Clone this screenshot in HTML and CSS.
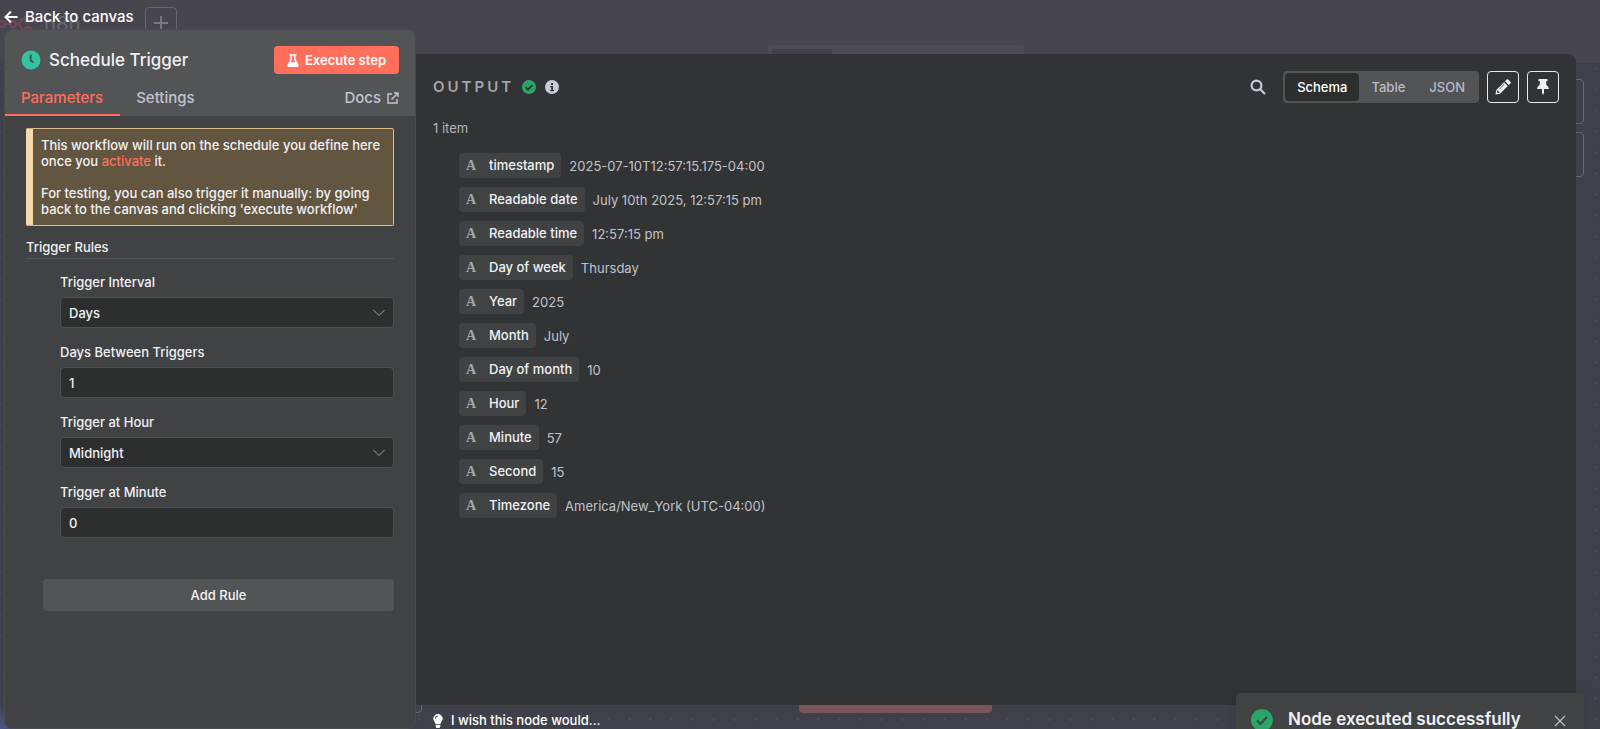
FILE: index.html
```html
<!DOCTYPE html>
<html lang="en">
<head>
<meta charset="utf-8">
<title>Schedule Trigger</title>
<link rel="stylesheet" href="styles.css">
</head>
<body>
<div class="app">
  <div class="canvas" aria-hidden="true">
    <div class="canvas-dots"></div>
    <div class="canvas-header"></div>
    <svg class="brand-mark" viewBox="0 0 32 18" width="32" height="18" fill="none" stroke="currentColor" stroke-width="2"><circle cx="2" cy="11" r="3"/><circle cx="13" cy="11" r="3"/><path d="M5 11h5M16 11h2c3 0 2-5 5-5h2M18 11c3 0 2 5 5 5h2"/><circle cx="28" cy="6" r="3"/><circle cx="28" cy="17" r="3"/></svg>
    <span class="brand-name">n8n</span>
    <span class="canvas-add"><svg viewBox="0 0 14 14" width="14" height="14" stroke="currentColor" stroke-width="2"><path d="M7 0v14M0 7h14"/></svg></span>
    <span class="canvas-tabs"></span>
    <span class="canvas-tool tool-one"></span>
    <span class="canvas-tool tool-two"></span>
    <span class="canvas-corner"></span>
    <span class="canvas-execute"></span>
  </div>

  <main class="dialog">
    <a class="back" href="#canvas">
      <svg viewBox="0 0 14 14" width="14" height="14" fill="none" stroke="currentColor" stroke-width="2"><path d="M13.500 7H1.500M7 1.500 1.500 7 7 12.500"/></svg>
      Back to canvas
    </a>
    <div class="panels">
      <section class="settings">
        <header class="settings-head">
          <div class="title-row">
            <svg viewBox="0 0 20 20" width="20" height="20"><circle cx="10" cy="10" r="9.500" fill="#31c49f"/><path d="M9.700 4.500V10.500L12.700 12.500" fill="none" stroke="#4d5152" stroke-width="2"/></svg>
            <h1>Schedule Trigger</h1>
            <button class="execute" type="button">
              <svg viewBox="0 0 12 13" width="12" height="13" fill="currentColor"><path fill-rule="evenodd" d="M2.500 0h7v1.500h-1V5l3.100 6.100Q12 13 10.500 13h-9Q0 13 .4 11.100L3.500 5V1.500h-1zM5 1.500v4L3.600 8.300h4.800L7 5.500v-4z"/></svg>
              Execute step
            </button>
          </div>
          <nav class="tabs">
            <a class="tab active" href="#parameters">Parameters</a>
            <a class="tab" href="#settings">Settings</a>
            <a class="tab docs" href="#docs">Docs
              <svg viewBox="0 0 12 12" width="12" height="12" fill="none" stroke="currentColor" stroke-width="1.500"><path d="M5 2H1v9h9V7M7 1h4v4M11 1 4.500 7.500"/></svg>
            </a>
          </nav>
        </header>
        <form class="settings-body">
          <p class="notice">This workflow will run on the schedule you define here once you <a href="#activate">activate</a> it.<br><br>For testing, you can also trigger it manually: by going back to the canvas and clicking 'execute workflow'</p>
          <h2>Trigger Rules</h2>
          <div class="fields">
            <div class="field">
              <label for="interval">Trigger Interval</label>
              <span class="select"><select id="interval"><option>Days</option></select><svg viewBox="0 0 12 8" width="12" height="8" fill="none" stroke="currentColor"><path d="M.5 1 6 6.500 11.500 1"/></svg></span>
            </div>
            <div class="field">
              <label for="days">Days Between Triggers</label>
              <input id="days" type="text" value="1">
            </div>
            <div class="field">
              <label for="hour">Trigger at Hour</label>
              <span class="select"><select id="hour"><option>Midnight</option></select><svg viewBox="0 0 12 8" width="12" height="8" fill="none" stroke="currentColor"><path d="M.5 1 6 6.500 11.500 1"/></svg></span>
            </div>
            <div class="field">
              <label for="minute">Trigger at Minute</label>
              <input id="minute" type="text" value="0">
            </div>
          </div>
          <button class="add-rule" type="button">Add Rule</button>
        </form>
      </section>

      <div class="right">
        <section class="output">
          <header class="output-head">
            <h2>OUTPUT</h2>
            <svg viewBox="0 0 14 14" width="14" height="14"><circle cx="7" cy="7" r="7" fill="#29a568"/><path d="M3.500 7.200 6 9.600l4.500-4.800" fill="none" stroke="#2b3532" stroke-width="1.800"/></svg>
            <svg viewBox="0 0 14 14" width="14" height="14"><circle cx="7" cy="7" r="7" fill="#c8cad6"/><path d="M6 3h2v2H6zM5.200 6H8v4h1v1.200H5.200V10h1V7.200h-1z" fill="#323335"/></svg>
            <button class="search" type="button" aria-label="Search"><svg viewBox="0 0 16 16" width="16" height="16" fill="none" stroke="currentColor" stroke-width="2.200"><circle cx="6.500" cy="6.500" r="4.900"/><path d="m10 10 5 5"/></svg></button>
            <div class="views">
              <button class="view active" type="button">Schema</button>
              <button class="view" type="button">Table</button>
              <button class="view" type="button">JSON</button>
            </div>
            <button class="square" type="button" aria-label="Edit output"><svg viewBox="0 0 16 16" width="16" height="16" fill="currentColor"><path fill-rule="evenodd" d="M9 3.200 12.800 7 5 14.800 0.500 15.500 1.200 11zM10 2.200 11.600.6q.8-.8 1.600 0l2.200 2.200q.8.800 0 1.600L13.800 6zM2.300 11.500l-.3 1.600.9.900 1.600-.3v-1.200H3.300v-1zM9 5.100 4.400 9.700l.4.400 4.600-4.600z"/></svg></button>
            <button class="square" type="button" aria-label="Pin data"><svg viewBox="0 0 12 16" width="12" height="16" fill="currentColor"><path d="M1.500 0h9v2.200H9L9.400 6Q12 7.300 12 10H7v4l-1 2-1-2v-4H0q0-2.700 2.600-4L3 2.200H1.500z"/></svg></button>
          </header>
          <p class="count">1 item</p>
          <ul class="schema">
            <li><span class="key"><b>A</b>timestamp</span><span>2025-07-10T12:57:15.175-04:00</span></li>
            <li><span class="key"><b>A</b>Readable date</span><span>July 10th 2025, 12:57:15 pm</span></li>
            <li><span class="key"><b>A</b>Readable time</span><span>12:57:15 pm</span></li>
            <li><span class="key"><b>A</b>Day of week</span><span>Thursday</span></li>
            <li><span class="key"><b>A</b>Year</span><span>2025</span></li>
            <li><span class="key"><b>A</b>Month</span><span>July</span></li>
            <li><span class="key"><b>A</b>Day of month</span><span>10</span></li>
            <li><span class="key"><b>A</b>Hour</span><span>12</span></li>
            <li><span class="key"><b>A</b>Minute</span><span>57</span></li>
            <li><span class="key"><b>A</b>Second</span><span>15</span></li>
            <li><span class="key"><b>A</b>Timezone</span><span>America/New_York (UTC-04:00)</span></li>
          </ul>
        </section>
        <a class="wish" href="#feedback">
          <svg viewBox="0 0 10 14" width="10" height="14" fill="currentColor"><path fill-rule="evenodd" d="M5 0a4.700 4.700 0 0 1 4.700 4.700c0 2-1.600 3-2.200 5.300h-5C1.900 7.700.3 6.700.3 4.700A4.700 4.700 0 0 1 5 0zM5 1.600a3 3 0 0 0-3 3h.9A2.100 2.100 0 0 1 5 2.500zM2.700 10.800h4.600v1.700L6.400 14H3.600l-.9-1.500z"/></svg>
          I wish this node would...
        </a>
      </div>
    </div>
  </main>

  <aside class="toast" role="status">
    <svg viewBox="0 0 22 22" width="22" height="22"><circle cx="11" cy="11" r="11" fill="#29a568"/><path d="m6 11.500 3.500 3.500 6.500-7" fill="none" stroke="#3a4642" stroke-width="2"/></svg>
    <h2>Node executed successfully</h2>
    <button type="button" aria-label="Close"><svg viewBox="0 0 12 12" width="12" height="12" fill="none" stroke="currentColor" stroke-width="1.200"><path d="m1 1 10 10M11 1 1 11"/></svg></button>
  </aside>
</div>
</body>
</html>
```
FILE: styles.css
```css
* { box-sizing: border-box; }

body {
  margin: 0;
  font-family: Inter, "Liberation Sans", sans-serif;
  font-size: 13px;
  font-weight: 500;
  line-height: 16px;
  color: #f0f1f5;
}

h1, h2, p, ul { margin: 0; padding: 0; }
a { color: inherit; text-decoration: none; }
svg { display: block; flex: none; }

button, input, select { font: inherit; color: inherit; }
button { border: 0; padding: 0; background: none; cursor: pointer; }

.app {
  position: relative;
  height: 100vh;
  overflow: hidden;
  background: #40404a;
}

/* Dimmed workflow canvas behind the dialog */
.canvas { position: absolute; inset: 0; }
.canvas > * { position: absolute; }

.canvas-dots {
  inset: 0;
  background:
    radial-gradient(circle at 0 100%, #4a5a90, transparent 24px),
    radial-gradient(circle, #4a4a55 1px, transparent 2px) 10px 16px / 21px 21px;
}

.canvas-header {
  inset: 0 0 auto;
  height: 63px;
  background: #47464f;
}

.brand-mark { left: 0; top: 13px; color: #744858; }
.brand-name { left: 44px; top: 12px; font-size: 20px; line-height: 24px; color: #65646e; }

.canvas-add {
  left: 145px;
  top: 7px;
  width: 32px;
  height: 32px;
  display: grid;
  place-items: center;
  border: 1px solid #666570;
  border-radius: 4px;
  color: #777681;
}

.canvas-tabs {
  left: 768px;
  top: 45px;
  width: 256px;
  height: 30px;
  border: 4px solid #4d4b57;
  border-right-width: 192px;
  border-radius: 4px;
  background: #42414a;
}

.canvas-tool {
  right: 16px;
  width: 45px;
  height: 45px;
  border: 1px solid #686873;
  border-radius: 4px;
}

.tool-one { top: 79px; }
.tool-two { top: 132px; }

.canvas-corner {
  left: 377px;
  bottom: 16px;
  width: 45px;
  height: 45px;
  border: 1px solid #686873;
  border-radius: 4px;
}

.canvas-execute {
  left: 799px;
  bottom: 16px;
  width: 193px;
  height: 42px;
  border-radius: 4px;
  background: #7b535b;
}

.dialog {
  position: relative;
  height: 100%;
  display: flex;
  flex-direction: column;
  padding: 5px 24px 0 4px;
}

.back {
  display: flex;
  align-items: center;
  align-self: flex-start;
  gap: 7px;
  height: 24px;
  font-size: 15px;
  line-height: 24px;
  color: #fff;
}

.panels { flex: 1; display: flex; min-height: 0; }

.settings {
  width: 412px;
  flex: none;
  overflow: hidden;
  border: 1px solid #4b4c4e;
  border-radius: 8px;
  background: #414244;
}

.settings-head { background: #535456; }

.title-row {
  display: flex;
  align-items: center;
  gap: 8px;
  padding: 16px 16px 0 16px;
}

.title-row h1 {
  flex: 1;
  font-size: 17px;
  line-height: 28px;
  font-weight: 500;
}

.execute {
  display: flex;
  align-items: center;
  justify-content: center;
  gap: 6px;
  width: 125px;
  height: 28px;
  border-radius: 4px;
  background: #ff6f5c;
  color: #fff;
  font-size: 13px;
  font-weight: 600;
}

.tabs { display: flex; height: 42px; padding-right: 16px; }

.tab {
  display: flex;
  align-items: center;
  padding: 8px 17px 0 16px;
  border-bottom: 2px solid transparent;
  color: #c1c3cf;
  font-size: 15px;
}

.tab.active { color: #ff6f5c; border-color: #ff6f5c; }
.docs { gap: 6px; margin-left: auto; padding-right: 0; }

.settings-body {
  display: flex;
  flex-direction: column;
  padding: 12px 21px;
}

.notice {
  padding: 8px 4px 8px 8px;
  border: 1px solid #d9bd8b;
  border-left: 7px solid #f5d9a8;
  border-radius: 2px;
  background: #635641;
}

.notice a { color: #ff6f5c; }

.settings-body h2 {
  margin-top: 13px;
  padding-bottom: 3px;
  border-bottom: 1px solid #515254;
  font-size: 13px;
  line-height: 16px;
  font-weight: 500;
}

.fields {
  display: grid;
  gap: 16px;
  padding: 15px 0 0 34px;
}

.field { display: grid; gap: 7px; }

.field input, .select select {
  width: 100%;
  height: 31px;
  padding: 0 8px;
  border: 1px solid #4f5052;
  border-radius: 4px;
  background: #2d2e2e;
  appearance: none;
}

.select { display: grid; align-items: center; }
.select select, .select svg { grid-area: 1 / 1; }
.select svg { justify-self: end; margin-right: 9px; color: #a0a2aa; pointer-events: none; }

.add-rule {
  margin: 41px 0 0 17px;
  height: 32px;
  border-radius: 4px;
  background: #535456;
}

.right {
  flex: 1;
  min-width: 0;
  display: flex;
  flex-direction: column;
  padding-top: 25px;
}

.output {
  flex: 1;
  min-height: 0;
  padding: 17px 17px 0 17px;
  border-radius: 0 8px 0 0;
  background: #323335;
}

.output-head { display: flex; align-items: center; gap: 8px; height: 32px; }

.output-head h2 {
  font-size: 15px;
  line-height: 24px;
  font-weight: 600;
  letter-spacing: 3px;
  color: #a3a5ad;
}

.output-head > svg + svg { margin-left: 1px; }

.search { margin: 0 9px 0 auto; color: #c8cad6; }

.views {
  display: flex;
  padding: 2px;
  border-radius: 4px;
  background: #535456;
}

.view {
  height: 28px;
  padding: 0 12px;
  border-radius: 4px;
  color: #b8bac5;
}

.view.active { background: #2d2e2e; color: #fff; }

.square {
  display: grid;
  place-items: center;
  width: 32px;
  height: 32px;
  border: 1px solid #e8e9ee;
  border-radius: 4px;
}

.count { margin-top: 17px; color: #b3b5bd; font-weight: 400; }

.schema {
  display: grid;
  gap: 7px;
  margin: 17px 0 0 26px;
  list-style: none;
  color: #c1c3cb;
  font-weight: 400;
}

.schema li { display: flex; gap: 8px; line-height: 27px; }

.key {
  display: flex;
  height: 25px;
  padding: 0 7px;
  border-radius: 4px;
  background: #414244;
  color: #f0f1f5;
  font-weight: 500;
  line-height: 25px;
}

.key b {
  width: 23px;
  color: #a3a5b0;
  font-family: "Liberation Serif", serif;
  font-size: 14px;
}

.wish {
  display: flex;
  align-items: center;
  align-self: flex-start;
  gap: 8px;
  height: 24px;
  padding: 7px 0 0 17px;
  color: #fff;
  line-height: 17px;
}

.toast {
  position: absolute;
  right: 16px;
  bottom: -46px;
  width: 348px;
  height: 82px;
  display: flex;
  align-items: flex-start;
  padding: 14px 18px 14px 15px;
  border-radius: 4px;
  background: #414244;
  box-shadow: 0 0 12px #0002;
}

.toast h2 { flex: 1; margin-left: 15px; font-size: 17px; line-height: 24px; font-weight: 600; }
.toast svg { margin-top: 2px; }
.toast button { margin-top: 6px; color: #c1c3cb; }
```
